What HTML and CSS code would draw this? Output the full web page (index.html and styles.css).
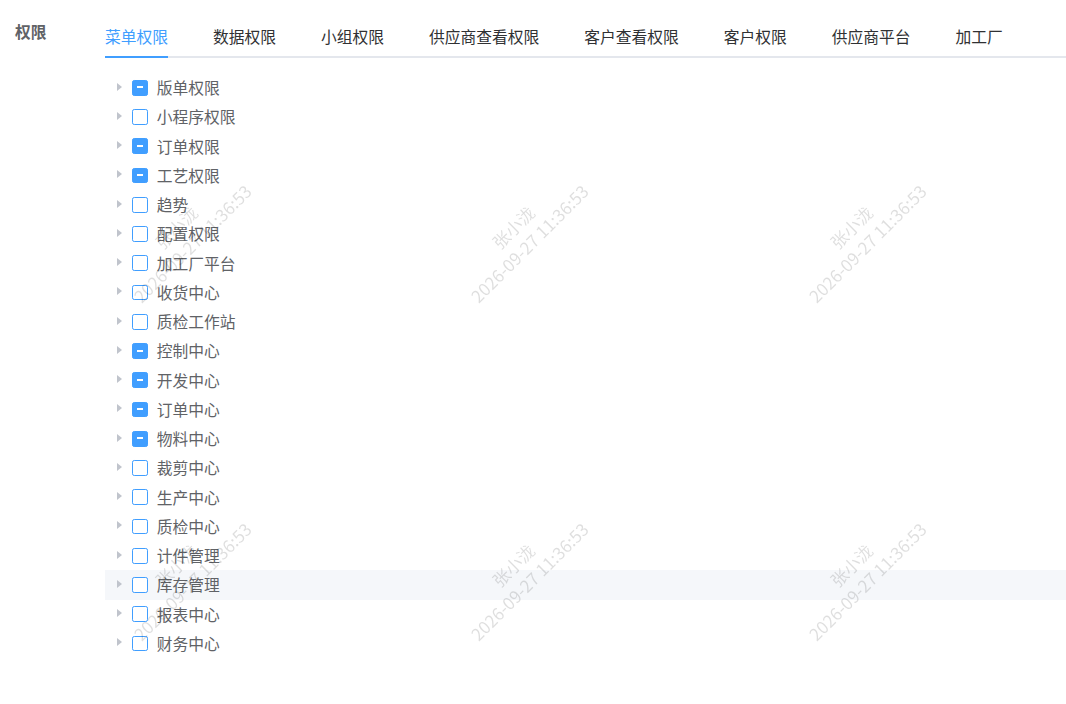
FILE: index.html
```html
<!DOCTYPE html>
<html lang="zh-CN">
<head>
  <meta charset="UTF-8">
  <meta name="viewport" content="width=device-width, initial-scale=1.0">
  <title>权限</title>
  <link rel="stylesheet" href="styles.css">
</head>
<body>
  <div class="form-item">
    <div class="form-label">权限</div>
    <div class="form-content">
      <div class="tabs-nav">
        <div class="tab active">菜单权限</div>
        <div class="tab">数据权限</div>
        <div class="tab">小组权限</div>
        <div class="tab">供应商查看权限</div>
        <div class="tab">客户查看权限</div>
        <div class="tab">客户权限</div>
        <div class="tab">供应商平台</div>
        <div class="tab">加工厂</div>
      </div>

      <div class="tree">
        <div class="node"><span class="caret"></span><span class="check half"></span><span class="label">版单权限</span></div>
        <div class="node"><span class="caret"></span><span class="check"></span><span class="label">小程序权限</span></div>
        <div class="node"><span class="caret"></span><span class="check half"></span><span class="label">订单权限</span></div>
        <div class="node"><span class="caret"></span><span class="check half"></span><span class="label">工艺权限</span></div>
        <div class="node"><span class="caret"></span><span class="check"></span><span class="label">趋势</span></div>
        <div class="node"><span class="caret"></span><span class="check"></span><span class="label">配置权限</span></div>
        <div class="node"><span class="caret"></span><span class="check"></span><span class="label">加工厂平台</span></div>
        <div class="node"><span class="caret"></span><span class="check"></span><span class="label">收货中心</span></div>
        <div class="node"><span class="caret"></span><span class="check"></span><span class="label">质检工作站</span></div>
        <div class="node"><span class="caret"></span><span class="check half"></span><span class="label">控制中心</span></div>
        <div class="node"><span class="caret"></span><span class="check half"></span><span class="label">开发中心</span></div>
        <div class="node"><span class="caret"></span><span class="check half"></span><span class="label">订单中心</span></div>
        <div class="node"><span class="caret"></span><span class="check half"></span><span class="label">物料中心</span></div>
        <div class="node"><span class="caret"></span><span class="check"></span><span class="label">裁剪中心</span></div>
        <div class="node"><span class="caret"></span><span class="check"></span><span class="label">生产中心</span></div>
        <div class="node"><span class="caret"></span><span class="check"></span><span class="label">质检中心</span></div>
        <div class="node"><span class="caret"></span><span class="check"></span><span class="label">计件管理</span></div>
        <div class="node hover"><span class="caret"></span><span class="check"></span><span class="label">库存管理</span></div>
        <div class="node"><span class="caret"></span><span class="check"></span><span class="label">报表中心</span></div>
        <div class="node"><span class="caret"></span><span class="check"></span><span class="label">财务中心</span></div>
      </div>
    </div>
  </div>

  <!-- 水印 -->
  <div class="watermark">
    <div class="mark" style="left: 184px; top: 235px;">张小泷<br>2026-09-27 11:36:53</div>
    <div class="mark" style="left: 521px; top: 235px;">张小泷<br>2026-09-27 11:36:53</div>
    <div class="mark" style="left: 859px; top: 235px;">张小泷<br>2026-09-27 11:36:53</div>
    <div class="mark" style="left: 184px; top: 573px;">张小泷<br>2026-09-27 11:36:53</div>
    <div class="mark" style="left: 521px; top: 573px;">张小泷<br>2026-09-27 11:36:53</div>
    <div class="mark" style="left: 859px; top: 573px;">张小泷<br>2026-09-27 11:36:53</div>
  </div>
</body>
</html>
```

FILE: styles.css
```css
body {
  margin: 0;
  font-family: "Noto Sans CJK SC", "Noto Sans", sans-serif;
  background: #fff;
  color: #606266;
}

.form-item {
  display: flex;
}

.form-label {
  width: 90px;
  padding-left: 15px;
  margin-top: 8.5px;
  line-height: 45px;
  font-size: 15.75px;
  font-weight: bold;
  color: #606266;
  flex-shrink: 0;
}

.form-content {
  flex: 1;
  padding-top: 11px;
}

/* 탭 */
.tabs-nav {
  display: flex;
  border-bottom: 2.25px solid #e4e7ed;
  margin-bottom: 15px;
}

.tab {
  position: relative;
  box-sizing: border-box;
  height: 45px;
  padding: 7px 22.5px 0;
  line-height: 38px;
  font-size: 15.75px;
  color: #303133;
}

.tab:first-child {
  padding-left: 0;
}

.tab.active {
  color: #409eff;
}

.tab.active::after {
  content: "";
  position: absolute;
  left: 0;
  right: 22.5px;
  bottom: -2.25px;
  height: 2.25px;
  background: #409eff;
}

/* 트리 */
.node {
  display: flex;
  align-items: center;
  height: 29.25px;
  font-size: 15.75px;
}

.node.hover {
  background: #f5f7fa;
}

.caret {
  width: 27px;
  height: 27px;
  display: flex;
  justify-content: center;
  align-items: center;
  margin-top: -2px;
}

.caret::before {
  content: "";
  width: 0;
  height: 0;
  margin-left: 1px;
  border-left: 5px solid #c0c4cc;
  border-top: 4.5px solid transparent;
  border-bottom: 4.5px solid transparent;
}

.check {
  position: relative;
  box-sizing: border-box;
  width: 15.75px;
  height: 15.75px;
  border: 1.125px solid #409eff;
  border-radius: 2.25px;
  background: #fff;
  margin-right: 9px;
}

.check.half {
  background: #409eff;
}

.check.half::before {
  content: "";
  position: absolute;
  left: 3.5px;
  right: 3.5px;
  top: 5.6px;
  height: 2px;
  background: #fff;
}

.label {
  color: #606266;
}

/* 水印 */
.watermark {
  position: fixed;
  inset: 0;
  pointer-events: none;
  overflow: hidden;
}

.mark {
  position: absolute;
  transform: translate(-50%, -50%) rotate(-45deg);
  text-align: center;
  white-space: nowrap;
  font-size: 17px;
  line-height: 23px;
  color: rgba(0, 0, 0, 0.13);
}
```
